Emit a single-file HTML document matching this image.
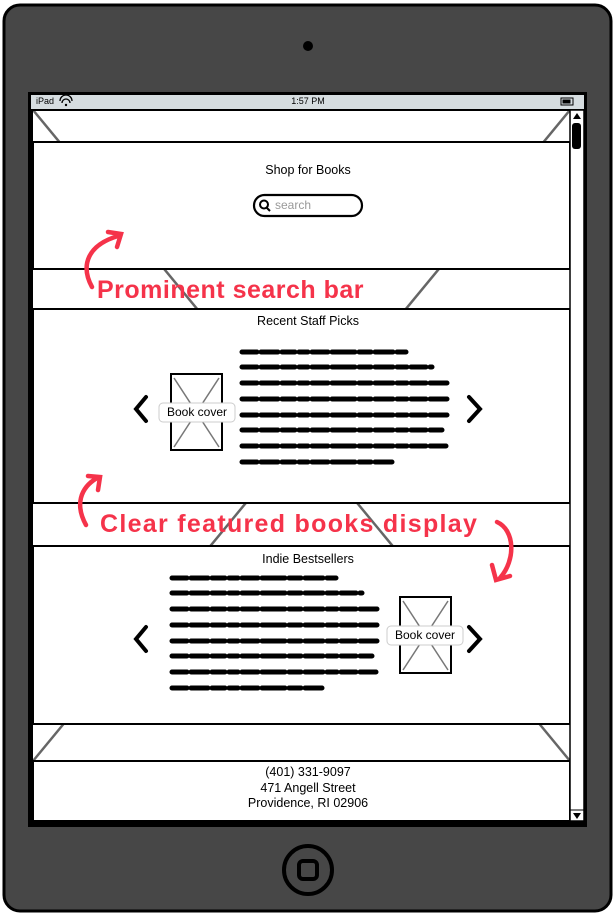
<!DOCTYPE html>
<html><head><style>
body{margin:0;width:616px;height:916px;background:#fff;overflow:hidden;font-family:"Liberation Sans",sans-serif;}
.t{position:absolute;font-size:12.5px;color:#000;text-align:center;}
.r{position:absolute;color:#f5334a;font-family:"Liberation Sans",sans-serif;font-weight:bold;font-size:25px;white-space:nowrap;}
</style></head><body>
<svg width="616" height="916" style="position:absolute;left:0;top:0">
<rect x="4" y="5" width="607" height="906" rx="16" fill="#474747" stroke="#000" stroke-width="3"/>
<circle cx="308" cy="46" r="5" fill="#000"/>
<circle cx="308" cy="870" r="24" fill="none" stroke="#000" stroke-width="4"/>
<rect x="299" y="861" width="18" height="18" rx="4" fill="none" stroke="#000" stroke-width="4"/>
<rect x="28" y="92" width="559" height="735" fill="#000"/>
<rect x="31" y="95" width="553" height="14" fill="#d6dde0"/>
<rect x="33" y="110" width="537" height="711" fill="#fff"/>
<line x1="33" y1="110" x2="570" y2="761" stroke="#666" stroke-width="2.5"/>
<line x1="570" y1="110" x2="33" y2="761" stroke="#666" stroke-width="2.5"/>
<g fill="#fff" stroke="#000" stroke-width="2">
<rect x="33" y="142" width="537" height="127"/>
<rect x="33" y="309" width="537" height="194"/>
<rect x="33" y="546" width="537" height="178"/>
<rect x="33" y="761" width="537" height="60"/>
</g>
<rect x="31" y="109" width="2" height="713" fill="#000"/>
<line x1="33" y1="110" x2="570" y2="110" stroke="#000" stroke-width="2"/>
<rect x="570" y="110" width="14" height="711" fill="#fff" stroke="#000" stroke-width="1.5"/>
<path d="M573 119 L577 113 L581 119Z" fill="#000"/>
<rect x="572" y="123" width="9" height="26" rx="3" fill="#000"/>
<line x1="570" y1="810" x2="584" y2="810" stroke="#000"/>
<path d="M573 813 L577 819 L581 813Z" fill="#000"/>
<rect x="561" y="98" width="12" height="7" fill="none" stroke="#000" stroke-width="1"/>
<rect x="562.5" y="99.5" width="8" height="4" fill="#000"/>
<path d="M60 101 a6 6 0 0 1 12 0 M62 103 a4 4 0 0 1 8 0" fill="none" stroke="#000" stroke-width="1.3"/><circle cx="66" cy="105" r="1.2"/>
<rect x="254" y="195" width="108" height="21" rx="10.5" fill="#fff" stroke="#000" stroke-width="2.2"/>
<circle cx="264" cy="204.5" r="4" fill="none" stroke="#000" stroke-width="2"/>
<line x1="267" y1="208" x2="270" y2="211" stroke="#000" stroke-width="2"/>
<g fill="none" stroke="#000" stroke-width="4" stroke-linecap="round">
<path d="M146 397 L136 409 L146 421"/><path d="M469 397 L480 409 L469 421"/>
<path d="M146 627 L136 639 L146 651"/><path d="M469 627 L480 639 L469 651"/>
</g>
<g fill="#fff" stroke="#000" stroke-width="2"><rect x="171" y="374" width="51" height="76"/><rect x="400" y="597" width="51" height="76"/></g>
<g stroke="#777" stroke-width="1.5"><line x1="174" y1="378" x2="219" y2="447"/><line x1="219" y1="378" x2="174" y2="447"/>
<line x1="403" y1="601" x2="448" y2="670"/><line x1="448" y1="601" x2="403" y2="670"/></g>
<g fill="#fff" stroke="#ccc" stroke-width="1"><rect x="159" y="403" width="76" height="19" rx="4"/><rect x="387" y="626" width="76" height="19" rx="4"/></g>
<g stroke="#000" stroke-width="5" stroke-linecap="round" stroke-dasharray="15 4 17 4 13 4 9 4 16 4 23 4 12 4 18 4 10 4" fill="none">
<path d="M242 352H406M242 367H432M242 383H451M242 399H449M242 415H451M242 430H442M242 446H446M242 462H392"/>
<path d="M172 578H336M172 593H362M172 609H381M172 625H379M172 641H381M172 656H372M172 672H376M172 688H322"/>
</g>
<g fill="none" stroke="#f5334a" stroke-width="4.5" stroke-linecap="round">
<path d="M92 287 C80 265 88 245 118 236"/><path d="M108 232 L121 234 L117 247"/>
<path d="M86 525 C75 505 80 488 97 478"/><path d="M88 476 L100 477 L98 490"/>
<path d="M497 522 C515 530 516 560 500 578"/><path d="M492 565 L496 580 L510 576"/>
</g>
</svg>
<div class="t" style="left:36px;top:96px;font-size:9px;">iPad</div>
<div class="t" style="left:270px;top:96px;width:76px;font-size:9px;">1:57 PM</div>
<div class="t" style="left:208px;top:163px;width:200px;">Shop for Books</div>
<div class="t" style="left:275px;top:198px;color:#999;font-size:12px;">search</div>
<div class="t" style="left:208px;top:314px;width:200px;">Recent Staff Picks</div>
<div class="t" style="left:208px;top:552px;width:200px;">Indie Bestsellers</div>
<div class="t" style="left:159px;top:405px;width:76px;font-size:12px;">Book cover</div>
<div class="t" style="left:387px;top:628px;width:76px;font-size:12px;">Book cover</div>
<div class="t" style="left:208px;top:765px;width:200px;line-height:15.5px;">(401) 331-9097<br>471 Angell Street<br>Providence, RI 02906</div>
<div class="r" style="left:97px;top:276px;letter-spacing:0.5px;">Prominent search bar</div>
<div class="r" style="left:100px;top:510px;letter-spacing:1.3px;">Clear featured books display</div>
</body></html>
